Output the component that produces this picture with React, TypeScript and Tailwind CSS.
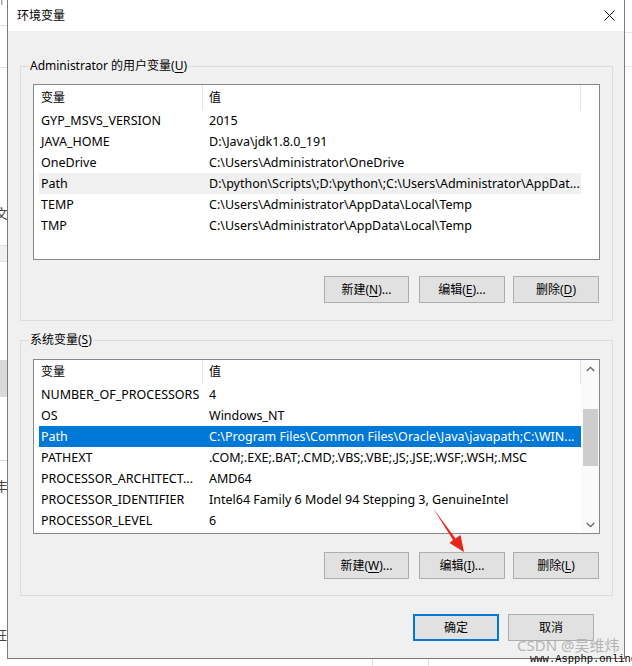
import React from 'react';

const FONT = "font-['Noto_Sans','Noto_Sans_CJK_SC',sans-serif]";

function U({ c }: { c: string }) {
  return <span className="underline underline-offset-[2px] decoration-1">{c}</span>;
}

function Btn({ children, def = false, narrow = false }: { children: React.ReactNode; def?: boolean; narrow?: boolean }) {
  return (
    <div
      className={
        def
          ? 'h-[27px] w-[86px] flex items-center justify-center text-[12px] text-black bg-[#e1e1e1] border-2 border-[#0078d7]'
          : narrow
          ? 'h-[27px] w-[85px] flex items-center justify-center text-[12px] text-black bg-[#e1e1e1] border border-[#adadad]'
          : 'h-[27px] w-[86px] flex items-center justify-center text-[12px] text-black bg-[#e1e1e1] border border-[#adadad]'
      }
    >
      {children}
    </div>
  );
}

function Chevron({ up }: { up: boolean }) {
  return (
    <svg width="9" height="6" viewBox="0 0 9 6">
      <polyline
        points={up ? '0.8,5 4.5,1.3 8.2,5' : '0.8,1 4.5,4.7 8.2,1'}
        fill="none"
        stroke="#606060"
        strokeWidth="1.2"
      />
    </svg>
  );
}

type Row = [string, string];

function List({
  rows,
  headerH,
  hoverIdx,
  selIdx,
  scroll,
  h,
}: {
  rows: Row[];
  headerH: string;
  hoverIdx?: number;
  selIdx?: number;
  scroll: boolean;
  h: string;
}) {
  return (
    <div className={`w-[567px] ${h} border border-[#828790] bg-white flex`}>
      <div className="w-[547px] flex flex-col">
        <div className={`${headerH} flex text-[12px] text-black`}>
          <div className="w-[169px] h-full border-r border-[#e5e5e5] pl-[7px] flex items-center">变量</div>
          <div className="w-[378px] h-full border-r border-[#e5e5e5] pl-[6px] flex items-center">值</div>
        </div>
        {rows.map((r, i) => {
          const sel = i === selIdx;
          const hov = i === hoverIdx;
          return (
            <div
              key={i}
              className={
                sel
                  ? 'ml-[5px] w-[542px] h-[21px] pt-[2px] flex items-center text-[12.5px] bg-[#0078d7] text-white'
                  : hov
                  ? 'ml-[5px] w-[542px] h-[21px] pt-[2px] flex items-center text-[12.5px] bg-[#f0f0f0] text-black'
                  : 'ml-[5px] w-[542px] h-[21px] pt-[2px] flex items-center text-[12.5px] text-black'
              }
            >
              <div className="w-[170px] pl-[2px] whitespace-nowrap overflow-hidden">{r[0]}</div>
              <div className="flex-1 whitespace-nowrap overflow-hidden">{r[1]}</div>
            </div>
          );
        })}
      </div>
      {scroll ? (
        <div className="w-[18px] h-full bg-[#fafafa] flex flex-col items-center">
          <div className="h-[17px] w-full flex items-center justify-center">
            <Chevron up />
          </div>
          <div className="flex-1 w-full flex flex-col items-center">
            <div className="mt-[32px] w-[15px] h-[57px] bg-[#cdcdcd]" />
          </div>
          <div className="h-[17px] w-full flex items-center justify-center">
            <Chevron up={false} />
          </div>
        </div>
      ) : (
        <div className="w-[18px]" />
      )}
    </div>
  );
}

export default function App() {
  const userRows: Row[] = [
    ['GYP_MSVS_VERSION', '2015'],
    ['JAVA_HOME', 'D:\\Java\\jdk1.8.0_191'],
    ['OneDrive', 'C:\\Users\\Administrator\\OneDrive'],
    ['Path', 'D:\\python\\Scripts\\;D:\\python\\;C:\\Users\\Administrator\\AppDat...'],
    ['TEMP', 'C:\\Users\\Administrator\\AppData\\Local\\Temp'],
    ['TMP', 'C:\\Users\\Administrator\\AppData\\Local\\Temp'],
  ];
  const sysRows: Row[] = [
    ['NUMBER_OF_PROCESSORS', '4'],
    ['OS', 'Windows_NT'],
    ['Path', 'C:\\Program Files\\Common Files\\Oracle\\Java\\javapath;C:\\WIN...'],
    ['PATHEXT', '.COM;.EXE;.BAT;.CMD;.VBS;.VBE;.JS;.JSE;.WSF;.WSH;.MSC'],
    ['PROCESSOR_ARCHITECT...', 'AMD64'],
    ['PROCESSOR_IDENTIFIER', 'Intel64 Family 6 Model 94 Stepping 3, GenuineIntel'],
    ['PROCESSOR_LEVEL', '6'],
  ];

  return (
    <div className={`relative w-[632px] h-[666px] bg-white overflow-hidden ${FONT}`}>
      {/* background window fragments */}
      <div className="absolute left-0 top-[25px] w-[7px] h-px bg-[#e3e3e3]" />
      <div className="absolute left-0 top-[67px] w-[7px] h-px bg-[#e3e3e3]" />
      <div className="absolute left-[-6px] top-[-9px] text-[12px] text-[#777]">件</div>
      <div className="absolute left-[-5px] top-[204px] text-[13px] text-[#444]">文</div>
      <div className="absolute left-0 top-[245px] w-[7px] h-[17px] bg-[#f0f0f0] border-y border-[#e0e0e0]" />
      <div className="absolute left-0 top-[360px] w-[7px] h-[37px] bg-[#d9d9d9]" />
      <div className="absolute left-0 top-[460px] w-[7px] h-px bg-[#d6d6d6]" />
      <div className="absolute left-[-5px] top-[477px] text-[13px] text-[#444]">丰</div>
      <div className="absolute left-[-6px] top-[626px] text-[13px] text-[#444]">玨</div>
      <div className="absolute left-[625px] top-[32px] w-[7px] h-px bg-[#e6e6e6]" />
      <div className="absolute left-[625px] top-[66px] w-[7px] h-px bg-[#e6e6e6]" />
      <div className="absolute left-[412px] top-0 w-[88px] h-[2px] bg-[#c9a097]" />
      <div className="absolute left-[372px] top-[659px] w-px h-[7px] bg-[#e0e0e0]" />
      <div className="absolute left-[428px] top-[659px] w-px h-[7px] bg-[#e0e0e0]" />

      {/* dialog window */}
      <div className="absolute left-[7px] top-0 w-[618px] h-[659px] border-x border-b border-[#7a7a7a] flex flex-col">
        <div className="h-[31px] bg-white flex items-center justify-between">
          <div className="pl-[9px] text-[12px] text-black">环境变量</div>
          <svg className="mr-[9px]" width="11" height="11" viewBox="0 0 11 11">
            <path d="M0.5 0.5 L10.5 10.5 M10.5 0.5 L0.5 10.5" stroke="#111" strokeWidth="1" />
          </svg>
        </div>
        <div className="flex-1 bg-[#f0f0f0] px-[12px] flex flex-col">
          <fieldset className="mt-[27px] border border-[#dcdcdc] px-[12px] pt-[10px] pb-[17px] flex flex-col">
            <legend className="ml-[-4px] px-[1px] text-[12px] leading-[16px] text-black">
              Administrator 的用户变量(<U c="U" />)
            </legend>
            <List rows={userRows} headerH="h-[25px]" hoverIdx={3} scroll={false} h="h-[176px]" />
            <div className="mt-[16px] flex justify-end pr-[1px]">
              <Btn narrow>
                新建(<U c="N" />)...
              </Btn>
              <div className="w-[10px]" />
              <Btn>
                编辑(<U c="E" />)...
              </Btn>
              <div className="w-[8px]" />
              <Btn>
                删除(<U c="D" />)
              </Btn>
            </div>
          </fieldset>
          <fieldset className="mt-[11px] border border-[#dcdcdc] px-[12px] pt-[11px] pb-[16px] flex flex-col">
            <legend className="ml-[-4px] px-[1px] text-[12px] leading-[16px] text-black">
              系统变量(<U c="S" />)
            </legend>
            <List rows={sysRows} headerH="h-[24px]" selIdx={2} scroll h="h-[175px]" />
            <div className="mt-[18px] flex justify-end pr-[1px]">
              <Btn narrow>
                新建(<U c="W" />)...
              </Btn>
              <div className="w-[10px]" />
              <Btn>
                编辑(<U c="I" />)...
              </Btn>
              <div className="w-[8px]" />
              <Btn>
                删除(<U c="L" />)
              </Btn>
            </div>
          </fieldset>
          <div className="mt-[18px] flex justify-end gap-[9px] pr-[18px]">
            <Btn def>确定</Btn>
            <Btn>取消</Btn>
          </div>
        </div>
      </div>

      {/* red annotation arrow */}
      <svg className="absolute left-0 top-0 pointer-events-none" width="632" height="666" viewBox="0 0 632 666">
        <polygon
          points="433,508 455.5,538.5 460.5,535 464,552 449.5,543 453,540"
          fill="#e8241b"
        />
      </svg>

      {/* watermark */}
      <div className="absolute left-[517px] top-[637px] text-[15px] leading-[16px] text-[#b4b4b4] whitespace-nowrap">
        CSDN @吴维炜
      </div>
      <div className="absolute left-[530px] top-[654px] text-[10.5px] leading-[11px] text-black whitespace-nowrap font-['Liberation_Mono',monospace]">
        www.Aspphp.online
      </div>
    </div>
  );
}
